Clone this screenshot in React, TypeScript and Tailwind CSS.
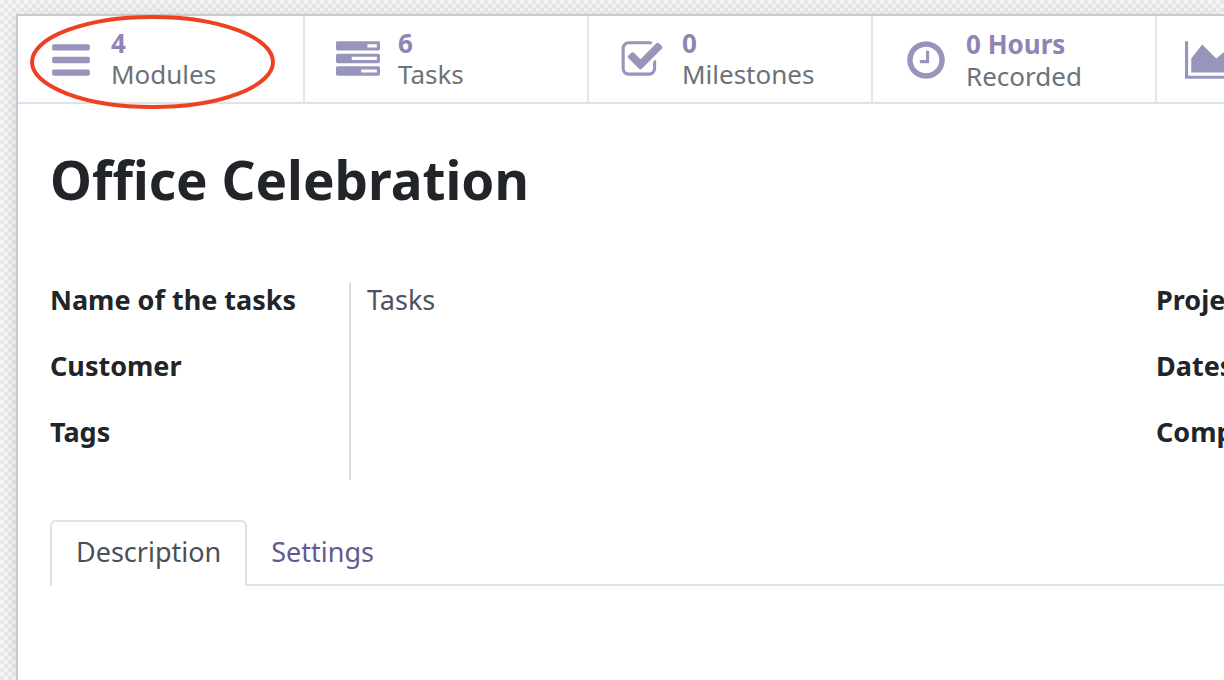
import type { ReactNode } from "react";

const paths = {
  bars: "M1664 1344v128q0 26-19 45t-45 19h-1408q-26 0-45-19t-19-45v-128q0-26 19-45t45-19h1408q26 0 45 19t19 45zm0-512v128q0 26-19 45t-45 19h-1408q-26 0-45-19t-19-45v-128q0-26 19-45t45-19h1408q26 0 45 19t19 45zm0-512v128q0 26-19 45t-45 19h-1408q-26 0-45-19t-19-45v-128q0-26 19-45t45-19h1408q26 0 45 19t19 45z",
  tasks:
    "M1024 1408h640v-128h-640v128zm-384-512h1024v-128h-1024v128zm640-512h384v-128h-384v128zm512 832v256q0 26-19 45t-45 19h-1664q-26 0-45-19t-19-45v-256q0-26 19-45t45-19h1664q26 0 45 19t19 45zm0-512v256q0 26-19 45t-45 19h-1664q-26 0-45-19t-19-45v-256q0-26 19-45t45-19h1664q26 0 45 19t19 45zm0-512v256q0 26-19 45t-45 19h-1664q-26 0-45-19t-19-45v-256q0-26 19-45t45-19h1664q26 0 45 19t19 45z",
  check:
    "M1472 930v318q0 119-84.5 203.5t-203.5 84.5h-832q-119 0-203.5-84.5t-84.5-203.5v-832q0-119 84.5-203.5t203.5-84.5h832q63 0 117 25 15 7 18 23 3 17-9 29l-49 49q-10 10-23 10-3 0-9-2-23-6-45-6h-832q-66 0-113 47t-47 113v832q0 66 47 113t113 47h832q66 0 113-47t47-113v-254q0-13 9-22l64-64q10-10 23-10 6 0 12 3 20 8 20 29zm231-489l-814 814q-24 24-57 24t-57-24l-430-430q-24-24-24-57t24-57l110-110q24-24 57-24t57 24l263 263 647-647q24-24 57-24t57 24l110 110q24 24 24 57t-24 57z",
  clock:
    "M1024 544v448q0 14-9 23t-23 9h-320q-14 0-23-9t-9-23v-64q0-14 9-23t23-9h224v-352q0-14 9-23t23-9h64q14 0 23 9t9 23zm416 352q0-148-73-273t-198-198-273-73-273 73-198 198-73 273 73 273 198 198 273 73 273-73 198-198 73-273zm224 0q0 209-103 385.5t-279.5 279.5-385.5 103-385.5-103-279.5-279.5-103-385.5 103-385.5 279.5-279.5 385.5-103 385.5 103 279.5 279.5 103 385.5z",
  chart:
    "M2048 1536v128h-2048v-1536h128v1408h1920zm-384-1024l256 896h-1664v-576l448-576 576 576z",
};

function StatIcon({ name }: { name: keyof typeof paths }) {
  const wide = name === "chart";
  return (
    <span className="flex w-11 shrink-0 justify-center">
      <svg
        viewBox={wide ? "0 0 2048 1792" : "0 0 1792 1792"}
        className={wide ? "h-11 w-[50px] shrink-0" : "h-11 w-11 shrink-0"}
        fill="#9795bc"
        aria-hidden="true"
      >
        <path d={paths[name]} />
      </svg>
    </span>
  );
}

function Stat({
  icon,
  value,
  label,
  stacked,
  children,
}: {
  icon: keyof typeof paths;
  value?: string;
  label?: string;
  stacked?: boolean;
  children?: ReactNode;
}) {
  return (
    <button
      type="button"
      aria-label={value ? undefined : "Reports"}
      className="relative flex w-71 shrink-0 items-start border-l-2 border-[#e2e5ea] pt-3 pl-[31px] text-left first:w-[285px] first:border-l-0"
    >
      <span className="pt-2.5">
        <StatIcon name={icon} />
      </span>
      {value && (
        <span
          className={
            stacked
              ? "flex flex-col pl-[18px] text-[26px] leading-8"
              : "flex flex-col pl-[18px] text-[26px] leading-[31px]"
          }
        >
          <span className="font-bold text-[#8f84b3]">{value}</span>
          <span className="text-[#6c7278]">{label}</span>
        </span>
      )}
      {children}
    </button>
  );
}

function FieldLabel({ children }: { children: ReactNode }) {
  return <dt className="h-[66px] font-bold whitespace-nowrap text-[#212529]">{children}</dt>;
}

export default function App() {
  return (
    <div className="min-h-screen overflow-hidden bg-[repeating-conic-gradient(#e9e9e9_0_25%,#f5f5f5_0_50%)] bg-size-[8px_8px] pt-3.5 pl-4 font-['Noto_Sans',sans-serif]">
      <main className="flex min-h-[calc(100vh-14px)] flex-col border-t-2 border-l-2 border-[#c9c7d6] bg-white shadow-[0_5px_20px_-15px_rgba(0,0,0,0.4),0_0_16px_rgba(0,0,0,0.08)]">
        <div className="flex h-[88px] border-b-2 border-[#dfe2e7]">
          <Stat icon="bars" value="4" label="Modules">
            <svg
              viewBox="0 0 246 96"
              className="pointer-events-none absolute -top-0.5 left-3 h-24 w-[246px]"
              fill="none"
              stroke="#ee4023"
              strokeWidth="4"
              aria-hidden="true"
            >
              <ellipse cx="122.500" cy="48" rx="120.500" ry="45" />
            </svg>
          </Stat>
          <Stat icon="tasks" value="6" label="Tasks" />
          <Stat icon="check" value="0" label="Milestones" />
          <Stat icon="clock" value="0 Hours" label="Recorded" stacked />
          <Stat icon="chart" />
        </div>

        <div className="pl-8">
          <h1 className="pt-[38px] text-[53px] leading-[76px] font-bold text-[#212529]">
            Office Celebration
          </h1>

          <div className="mt-16 flex text-[27px] leading-9">
            <dl className="grid w-[1106px] shrink-0 grid-cols-[299px_1fr]">
              <div>
                <FieldLabel>Name of the tasks</FieldLabel>
                <FieldLabel>Customer</FieldLabel>
                <FieldLabel>Tags</FieldLabel>
              </div>
              <dd className="border-l-2 border-[#dcdddf] pl-4 text-[#4c535b]">Tasks</dd>
            </dl>
            <dl>
              <FieldLabel>Project Manager</FieldLabel>
              <FieldLabel>Dates</FieldLabel>
              <FieldLabel>Company</FieldLabel>
            </dl>
          </div>

          <div role="tablist" className="mt-10 flex text-[27px] leading-9">
            <button
              type="button"
              role="tab"
              aria-selected="true"
              className="rounded-t-md border-2 border-b-0 border-[#dfe2e7] px-6 pt-3 pb-4 text-[#495057]"
            >
              Description
            </button>
            <button
              type="button"
              role="tab"
              aria-selected="false"
              className="flex-1 border-b-2 border-[#dfe2e7] px-6 pt-3.5 pb-3.5 text-left text-[#635a8f]"
            >
              Settings
            </button>
          </div>
        </div>
      </main>
    </div>
  );
}
